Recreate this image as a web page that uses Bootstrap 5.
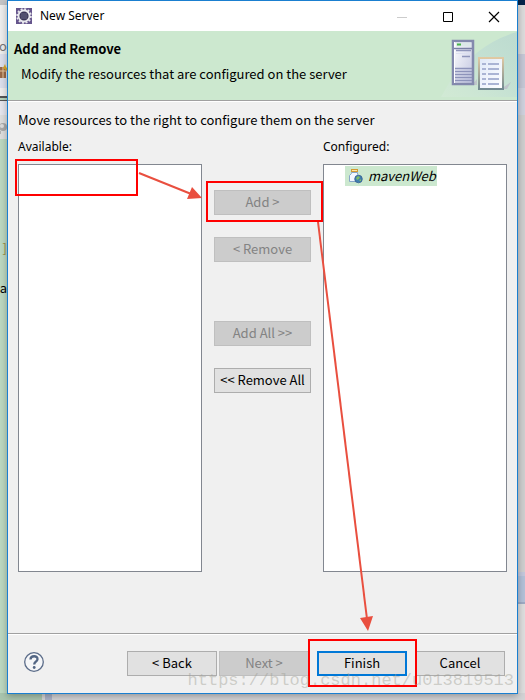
<!DOCTYPE html>
<html lang="en">
<head>
<meta charset="utf-8">
<meta name="viewport" content="width=device-width, initial-scale=1">
<title>New Server</title>
<link href="https://cdn.jsdelivr.net/npm/bootstrap@5.3.0/dist/css/bootstrap.min.css" rel="stylesheet">
<style>
body{font-family:"Noto Sans CJK SC","Noto Sans",sans-serif;font-size:13px;line-height:18px;color:#000;background:#e4e4e6;overflow-x:hidden}
.desktop{min-height:100vh;padding:0 7px 6px 7px}
.behind-left,.behind-right,.behind-bottom{position:absolute;z-index:0;overflow:hidden}
.behind-left{left:0;top:0;bottom:0;width:7px;background:linear-gradient(#c4c4c6 0 5px,#eee 5px 54px,#dcdfec 54px 88px,#eee 88px 96px,#555 96px 98px,#b5d3bb 98px 100px,#555 100px 101px,#e6e6ee 101px 115px,#dedede 115px 139px,#bcd8c1 139px)}
.behind-right{right:0;top:0;bottom:0;width:7px;background:linear-gradient(#04244a 0 5px,#dcdcdc 5px 54px,#c5c8d6 54px 88px,#d0d2de 88px 115px,#cfcfcf 115px 572px,#c3c8dc 572px 576px,#b3c1d8 576px 602px,#9eabc4 602px 604px,#dedede 604px)}
.behind-bottom{left:0;right:0;bottom:0;height:7px;background:linear-gradient(90deg,#a9c5ae 0 42px,#d5d5d5 42px 45px,#aab2c8 45px 52px,#d3d3d5 52px)}
.peek{position:absolute;right:0}
.peek-o{top:37px;color:#777}
.peek-bracket{top:239px;color:#9a8f45}
.peek-a{top:279px}
.peek-icon{position:absolute;left:0}
.dialog-win{z-index:1;border:1px solid #1a7fd0;background:#f0f0f0;min-height:694px;box-shadow:0 2px 7px rgba(0,0,0,.3)}
.title-row{height:30px;background:#fff;padding-left:8px}
.title-row h1,.pane-label{font-family:"Noto Sans",sans-serif;font-size:12px;line-height:18px;font-weight:400}
.win-btn{width:46px;height:30px;border:0;background:transparent;padding:0}
.banner{background:#cce8cf;height:70px;border-bottom:1px solid #a0a0a0;padding:9px 0 0 6px}
.banner h2{font-size:13px;line-height:18px;font-weight:700;margin-bottom:7px}
.banner p{padding-left:7px}
.banner-art{position:absolute;right:0;top:0}
.work{border-top:1px solid #fff;padding:9px 10px 0}
.intro{margin-bottom:9px}
.pane-label{margin-bottom:8px}
.pane{background:#fff;border:1px solid #828790;min-height:408px;padding:1px 0 0 21px}
.tree-item{background:#cce8cf;height:20px;padding:0 1px 0 4px;gap:5px;font-style:italic}
.mid{width:97px;padding-top:52px;margin:0 12px}
.push{height:25px;border:1px solid #adadad;border-radius:0;background:#e1e1e1;color:#000;font-size:13px;line-height:18px;padding:0 0 2px;white-space:nowrap}
.push:disabled{background:#ccc;border-color:#bfbfbf;color:#838383;opacity:1}
.push-main{border:2px solid #0078d7}
.gap-a{margin-bottom:22px}
.gap-b{margin-bottom:59px}
.foot{border-top:1px solid #a0a0a0;box-shadow:inset 0 1px #fff;height:60px;padding:17px 12px 0 15px}
.foot .push{width:90px}
.next-gap{margin-left:2px}
.main-gap{margin:0 8px}
.ring{position:absolute;border:2px solid #f00;pointer-events:none;z-index:3}
.ring-pane{left:-4px;top:-6px;width:123px;height:37px}
.ring-add{left:-8px;top:-9px;right:-12px;bottom:-7px}
.ring-finish{left:-9px;top:-12px;right:-10px;bottom:-11px}
.arrows{position:absolute;left:-1px;top:-1px;z-index:2;pointer-events:none}
.watermark{position:absolute;right:3px;bottom:0;z-index:4;font-family:"Liberation Mono",monospace;font-size:17px;line-height:24px;color:rgba(160,160,150,.45);pointer-events:none}
</style>
</head>
<body>
<div class="desktop position-relative d-flex flex-column">
  <div class="behind-right" aria-hidden="true"></div>
  <div class="behind-left" aria-hidden="true">
    <span class="peek peek-o">o</span>
    <svg class="peek-icon" style="top:64px" width="7" height="16"><path d="M0 3h6v11H0z" fill="#9b6947"/><path d="M0 7h7M3 3v11" stroke="#e8c9a0"/><path d="M5 0l1 3 1 1v3l-4-3z" fill="#d8a92d"/></svg>
    <svg class="peek-icon" style="top:122px" width="7" height="12"><circle cx="3" cy="5" r="4" fill="#aaa"/><circle cx="2" cy="4" r="2" fill="#ddd"/><path d="M0 9v3" stroke="#888"/></svg>
    <span class="peek peek-bracket">]</span><span class="peek peek-a">a</span>
  </div>
  <div class="behind-bottom" aria-hidden="true"></div>

  <main class="dialog-win position-relative flex-grow-1 d-flex flex-column">
    <header class="title-row d-flex align-items-center">
      <svg width="16" height="16" viewBox="0 0 16 16" aria-hidden="true"><rect width="16" height="16" fill="#65558c"/><circle cx="8" cy="8" r="6.9" fill="none" stroke="#e8e8ec" stroke-width="1.800" stroke-dasharray="2 1.610"/><circle cx="8" cy="8" r="5.500" fill="#3a3557" stroke="#e9e9ee" stroke-width="1.800"/><path d="M5 6h6M4.500 8h7M5 10h6" stroke="#777894" stroke-width=".8"/></svg>
      <h1 class="mb-0 ms-1 ps-1 flex-grow-1">New Server</h1>
      <button class="win-btn" aria-label="Minimize" disabled><svg width="12" height="12"><path d="M1 6.500h10" stroke="#ccc"/></svg></button>
      <button class="win-btn" aria-label="Maximize"><svg width="12" height="12"><path d="M1.500 1.500h9v9h-9z" fill="none" stroke="#000"/></svg></button>
      <button class="win-btn" aria-label="Close"><svg width="12" height="12"><path d="M1 1l10 10M11 1L1 11" stroke="#000" stroke-width="1.200"/></svg></button>
    </header>

    <section class="banner position-relative">
      <svg class="banner-art" width="76" height="69" viewBox="0 0 76 69" aria-hidden="true">
        <defs>
          <linearGradient id="sweep" x1="0" y1="1" x2="1" y2="0"><stop offset="0" stop-color="#d9ecdc" stop-opacity=".7"/><stop offset=".55" stop-color="#bfdcd5"/><stop offset="1" stop-color="#b2d2d0"/></linearGradient>
          <linearGradient id="tower" x1="0" x2="1" y2="1"><stop offset="0" stop-color="#fff"/><stop offset="1" stop-color="#bfc3df"/></linearGradient>
          <linearGradient id="sheetEdge" x2="0" y2="1"><stop offset="0" stop-color="#e0c9a3"/><stop offset="1" stop-color="#728a91"/></linearGradient>
          <linearGradient id="sheet" x2="1" y2="1"><stop offset="0" stop-color="#dfe8f8"/><stop offset="1" stop-color="#fff"/></linearGradient>
        </defs>
        <path d="M0 66L8 52Q36 12 76 1V66z" fill="url(#sweep)" opacity=".6"/>
        <path d="M7 54h24l5-6v6zM60 58l10-7-4 7z" fill="#b7b1c4" opacity=".6"/>
        <path d="M12 10h20v43H12z" fill="url(#tower)" stroke="#8389ad" stroke-width="2.500"/>
        <path d="M13.500 11v41" stroke="#fff"/>
        <path d="M15 11.500h15v4H15z" fill="#dce8e8"/><path d="M16 13.500h4" stroke="#48b449" stroke-width="2"/>
        <path d="M13 17.500h18" stroke="#7a80a5" stroke-width="1.500"/><path d="M15 19.500h15M21 25.500h8" stroke="#8f95ba" stroke-width="1.300"/><path d="M15 22.500h15" stroke="#dcdff0"/>
        <path d="M14 37.500h17M14 40.500h17M14 43.500h17M14 46.500h17M14 49.500h17" stroke="#8d93ba" stroke-width="1.500"/>
        <path d="M38 27h24v31H38z" fill="url(#sheet)" stroke="url(#sheetEdge)" stroke-width="2"/>
        <path d="M41 33h4M41 38h4M41 43h4M41 48h4M41 53h4M47 33h11M47 38h11M47 43h11M47 48h11M47 53h11" stroke="#aab4d4" stroke-width="1.800"/>
      </svg>
      <h2>Add and Remove</h2>
      <p class="mb-0">Modify the resources that are configured on the server</p>
    </section>

    <section class="work flex-grow-1 d-flex flex-column">
      <p class="intro">Move resources to the right to configure them on the server</p>
      <div class="d-flex">
        <div class="col">
          <div class="pane-label" id="lblAvailable">Available:</div>
          <div class="pane position-relative" role="tree" aria-labelledby="lblAvailable"><span class="ring ring-pane"></span></div>
        </div>
        <div class="mid d-flex flex-column flex-shrink-0">
          <div class="position-relative d-grid gap-a"><button class="btn push" disabled>Add &gt;</button><span class="ring ring-add"></span></div>
          <button class="btn push gap-b" disabled>&lt; Remove</button>
          <button class="btn push gap-a" disabled>Add All &gt;&gt;</button>
          <button class="btn push">&lt;&lt; Remove All</button>
        </div>
        <div class="col">
          <div class="pane-label" id="lblConfigured">Configured:</div>
          <div class="pane" role="tree" aria-labelledby="lblConfigured">
            <div class="tree-item d-inline-flex align-items-center" role="treeitem">
              <svg width="14" height="16" viewBox="0 0 14 16" aria-hidden="true"><path d="M2 2.500h7" stroke="#d39b32" stroke-width="3"/><path d="M3 2.500h5" stroke="#fbe7a7"/><path d="M2.500 4.500h6v2l1 1v6h-9v-6l2-2z" fill="#f3f8ff" stroke="#87a5c9"/><circle cx="9.500" cy="11" r="3.800" fill="#3f7fae" stroke="#376090" stroke-width=".8"/><path d="M7 10l2-2 2 1-1 2-2 1zM10 13l2-2v2z" fill="#80bd66"/></svg>
              <span>mavenWeb</span>
            </div>
          </div>
        </div>
      </div>
    </section>

    <footer class="foot d-flex align-items-start">
      <button class="border-0 bg-transparent p-0 me-auto" aria-label="Help"><svg width="22" height="22" viewBox="0 0 22 22"><circle cx="11" cy="11" r="9.300" fill="#f5f6f8" stroke="#5b6c89" stroke-width="1.300"/><path d="M7.500 8.500C7.500 4.200 15 4.200 14.500 8.300c-.3 2.400-3.300 2.600-3.300 5.200" fill="none" stroke="#536684" stroke-width="2.300"/><circle cx="11.200" cy="16.500" r="1.400" fill="#536684"/></svg></button>
      <button class="btn push">&lt; Back</button>
      <button class="btn push next-gap" disabled>Next &gt;</button>
      <div class="position-relative main-gap"><button class="btn push push-main d-block">Finish</button><span class="ring ring-finish"></span></div>
      <button class="btn push">Cancel</button>
    </footer>

    <svg class="arrows" width="511" height="694" viewBox="7 0 511 694" aria-hidden="true">
      <g stroke="#e94f3f" stroke-width="2" fill="#e94f3f"><path d="M139 173L190 193.500"/><path d="M318 222L367 619"/><path stroke="none" d="M202 198l-15 1 5-12zM368 631l-8-13 13-2z"/></g>
    </svg>
    <div class="watermark" aria-hidden="true">https://blog.csdn.net/u013819513</div>
  </main>
</div>
<script src="https://cdn.jsdelivr.net/npm/bootstrap@5.3.0/dist/js/bootstrap.bundle.min.js"></script>
</body>
</html>
